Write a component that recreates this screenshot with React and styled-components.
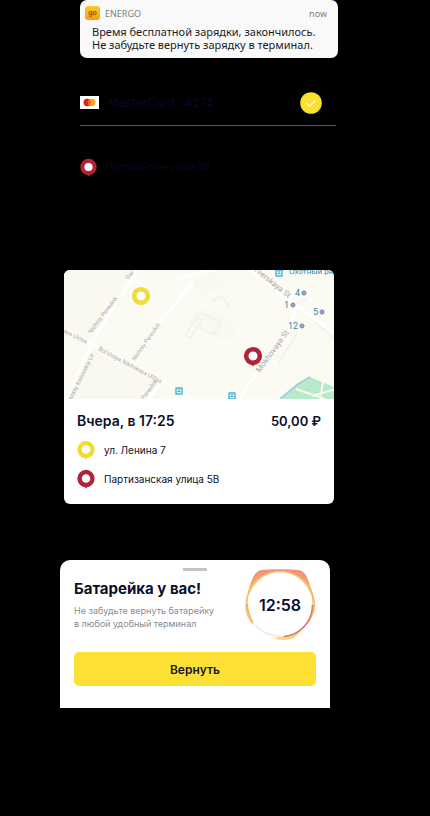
import React from 'react';
import styled, { createGlobalStyle } from 'styled-components';

const GlobalStyle = createGlobalStyle`
    * {
        box-sizing: border-box;
    }

    body {
        margin: 0;
        background: #000;
        color: #0d0f2b;
        font-family: Inter, "Liberation Sans", sans-serif;
    }

    h2, p {
        margin: 0;
    }
`;

const Page = styled.main`
    min-height: 100vh;
    background: #000;
`;

const Notification = styled.section`
    margin: 0 92px 0 80px;
    padding: 5px 11px 7px 5px;
    background: #f9f9f9;
    border-radius: 7px;
    font-family: "Noto Sans", sans-serif;
`;

const NotificationHead = styled.header`
    display: flex;
    align-items: center;
    gap: 5px;
    height: 16px;
    font-size: 9px;
    color: #7e7e7e;
`;

const NotificationTime = styled.time`
    margin-left: auto;
`;

const NotificationText = styled.p`
    padding: 4px 0 0 7px;
    font-size: 11px;
    line-height: 13px;
    color: #1b1b1b;
    white-space: nowrap;
`;

const Payment = styled.section`
    display: flex;
    align-items: center;
    gap: 9px;
    height: 46px;
    margin: 22px 94px 0 80px;
    padding-right: 14px;
    border-bottom: 1px solid #595955;
    color: #060a26;
    font-size: 12px;
`;

const PaymentName = styled.span`
    flex: 1;
`;

const Place = styled.div`
    display: flex;
    align-items: center;
    gap: 9px;
    font-size: ${props => props.$size || 10}px;
    line-height: 20px;
`;

const CurrentPlace = styled.section`
    margin: 31px 94px 0 80px;
    color: #060a26;
`;

const TripCard = styled.article`
    margin: 93px 96px 0 64px;
    background: #fff;
    border-radius: 6px;
    overflow: hidden;
`;

const MapView = styled.svg`
    display: block;
    width: 100%;
    height: 129px;
`;

const TripBody = styled.div`
    display: flex;
    flex-direction: column;
    gap: 9px;
    padding: 12px 13px 15px;
`;

const TripHead = styled.div`
    display: flex;
    justify-content: space-between;
    font-size: 14px;
    font-weight: 600;
    line-height: 20px;
`;

const TripPrice = styled.span`
    font-size: 13px;
`;

const Sheet = styled.section`
    margin: 56px 100px 0 60px;
    padding: 8px 14px 22px;
    background: #fff;
    border-radius: 10px 10px 0 0;
`;

const Handle = styled.div`
    width: 24px;
    height: 3px;
    margin: 0 auto;
    background: #c4c4c4;
`;

const SheetHead = styled.div`
    display: flex;
    justify-content: space-between;
    height: 71px;
`;

const SheetTitle = styled.h2`
    padding-top: 8px;
    font-size: 15px;
    font-weight: 700;
    line-height: 20px;
`;

const SheetText = styled.p`
    padding-top: 5px;
    color: #8b8b92;
    font-size: 9px;
    line-height: 13px;
    white-space: nowrap;
`;

const Timer = styled.div`
    display: grid;
    grid-template-rows: 67px;
    place-items: center;
    width: 72px;

    > * {
        grid-area: 1 / 1;
    }
`;

const TimerValue = styled.time`
    font-size: 16px;
    font-weight: 600;
`;

const ReturnButton = styled.button`
    display: block;
    width: 100%;
    height: 34px;
    margin-top: 10px;
    padding: 0;
    border: 0;
    border-radius: 5px;
    background: #fce033;
    color: #17152a;
    font: 600 12px Inter, "Liberation Sans", sans-serif;
    cursor: pointer;
`;

const yellow = '#f3db35';
const red = '#b02338';

const PinShape = ({ color, tail }) => (
    <g>
        {tail && <path d="M6 16 L10 20.5 L14 16Z" fill={color} />}
        <circle cx="10" cy="10" r="6.8" fill="#fff" stroke={color} strokeWidth="4.6" />
    </g>
);

const Pin = ({ color, tail, size = 18 }) => (
    <svg width={size} height={size + 2} viewBox="1 0 18 21" aria-hidden="true">
        <PinShape color={color} tail={tail} />
    </svg>
);

const AppIcon = () => (
    <svg width="15" height="14" viewBox="0 0 15 14" aria-hidden="true">
        <defs>
            <linearGradient id="appIcon" x1="0" y1="0" x2="0" y2="1">
                <stop offset="0" stopColor="#ffc928" />
                <stop offset="1" stopColor="#f79b14" />
            </linearGradient>
        </defs>
        <rect width="15" height="14" rx="3" fill="url(#appIcon)" />
        <text x="7.5" y="9" textAnchor="middle" fontSize="7" fontWeight="700" fontFamily="Inter, sans-serif" fill="#a05a08">go</text>
    </svg>
);

const MasterCardLogo = () => (
    <svg width="19" height="13" viewBox="0 0 19 13" aria-hidden="true">
        <rect width="19" height="13" fill="#fff" />
        <circle cx="7.2" cy="6.5" r="3.7" fill="#e3211c" />
        <circle cx="11.8" cy="6.5" r="3.7" fill="#f6a22c" />
        <path d="M9.5 3.6a3.7 3.7 0 0 1 0 5.8a3.7 3.7 0 0 1 0-5.8Z" fill="#f2601c" />
    </svg>
);

const CheckMark = () => (
    <svg width="22" height="22" viewBox="0 0 22 22" role="img" aria-label="Selected">
        <circle cx="11" cy="11" r="10.8" fill="#fbdf31" />
        <path d="M6.5 11.2l3.1 3.1 5.8-6" fill="none" stroke="#fffbe0" strokeWidth="1.3" />
    </svg>
);

const TimerRing = () => (
    <svg width="72" height="72" viewBox="0 0 72 72" fill="none" aria-hidden="true">
        <defs>
            <linearGradient id="blob" x1="0" y1="0" x2="0" y2="1">
                <stop offset="0" stopColor="#ee8f80" />
                <stop offset="0.3" stopColor="#f5b56c" />
                <stop offset="1" stopColor="#fbd784" />
            </linearGradient>
        </defs>
        <path
            fill="url(#blob)"
            d="M17 1C26 0 46 0 55 1C63 3 64 11 67 19C70 27 72 33 71 40C69 51 61 57 56 63C52 69 46 71 39 71C31 71 27 68 21 65C10 59 4 52 2 43C0 34 3 27 5 19C8 10 10 3 17 1Z"
        />
        <path d="M8 54C13 63 23 69 33 69L34 64Z" fill="#fff" />
        <circle cx="36" cy="35" r="32.5" fill="#fff" />
        <path d="M5 24C10 11 22 2.500 36 2.500S62 11 67 24" stroke="#fbc56d" strokeWidth="1.6" />
        <path d="M3.500 35C3.500 42 6 48 9 53" stroke="#ee9f59" strokeWidth="1" />
        <path d="M11 56C19 65 28 67 37 67.500" stroke="#f0e4ee" strokeWidth="1.6" />
        <path d="M40 67.500C56 66 68.500 53 68.500 36" stroke="#d9737a" strokeWidth="1.5" />
    </svg>
);

const streets = [
    { name: 'Gar', x: 64, y: 10, turn: -50 },
    { name: 'Nizhniy Pereulok', x: 27, y: 64, turn: -53 },
    { name: 'Nizhniy Pereulok', x: 71, y: 91, turn: -55 },
    { name: 'aya Ulitsa', x: -1, y: 62, turn: 27 },
    { name: "Bol'shaya Nikitskaya Ulitsa", x: 34, y: 80, turn: 28 },
    { name: 'Maliy Kislovskiy Ln', x: 8, y: 130, turn: -64 },
    { name: 'Pereulok', x: 80, y: 130, turn: -54 },
    { name: 'Tverskaya St', x: 189, y: 0, turn: 39, big: true },
    { name: 'Mokhovaya St', x: 196, y: 103, turn: -54, big: true },
];

const exits = [
    { label: '4', x: 231, y: 26 },
    { label: '1', x: 220, y: 38 },
    { label: '5', x: 249, y: 45 },
    { label: '12', x: 224, y: 59 },
];

const stations = [
    { x: 215, y: 3 },
    { x: 115, y: 121 },
    { x: 168, y: 126 },
];

const CityMap = () => (
    <MapView viewBox="0 0 270 129" preserveAspectRatio="xMidYMid slice" role="img" aria-label="Map">
        <rect width="270" height="129" fill="#fcfbf3" />
        <g fill="#faf9f0">
            <path d="M0 0H66L30 70L0 57Z M30 77L103 112L92 129H8Z" />
            <path d="M125 12L148 3L160 15L137 27Z M121 50L136 37L158 46L174 64L160 72Z" />
        </g>
        <g fill="none" stroke="#f3f3ed" strokeWidth="2">
            <path d="M148 31L158 26L166 38M121 65l12-18 5 3-12 18zM139 44l17 8-6 13-18-9M214 94l19-31" />
            <path d="M232 34l10-5M251 52l19 16" />
        </g>
        <g fill="none" stroke="#fff" strokeWidth="3">
            <path d="M-2 58L107 115L128 129M75-2L28 71L4 130M129 12L96 52L72 91M99 110L84 130" />
            <path d="M180-5L230 34L272 64M233 34L222 70L184 114L176 130M109 10L160-4" />
        </g>
        <path d="M216 129L234 114L246 107L270 117V129Z" fill="#b9e9cb" />
        <path d="M216 129L234 114L246 107" fill="none" stroke="#a9cbe3" strokeWidth="2" />
        <path d="M232 119l29 10M259 112l-3 17M248 126l24-7" fill="none" stroke="#f6faee" strokeWidth="2" />
        <g fontFamily="Roboto, sans-serif" fill="#aaa9a6">
            {streets.map((street, i) => (
                <text
                    key={i}
                    fontSize={street.big ? 8 : 6}
                    transform={`translate(${street.x} ${street.y}) rotate(${street.turn})`}
                >
                    {street.name}
                </text>
            ))}
        </g>
        <g fontFamily="Roboto, sans-serif" fill="#318aa8">
            <text x="225" y="4" fontSize="8">Охотный ряд</text>
            {exits.map(exit => {
                const iconX = exit.x + exit.label.length * 5 + 4;
                return (
                    <g key={exit.label}>
                        <text x={exit.x} y={exit.y} fontSize="9">{exit.label}</text>
                        <circle cx={iconX} cy={exit.y - 3} r="2" fill="#cfd3e6" stroke="#67789c" />
                        <path d={`M${iconX - 1} ${exit.y - 3}h2`} stroke="#67789c" />
                    </g>
                );
            })}
        </g>
        {stations.map(station => (
            <g key={station.x} transform={`translate(${station.x - 3} ${station.y - 3})`}>
                <rect width="6" height="6" fill="#dff6fa" stroke="#3bb0c9" strokeWidth="1.3" />
                <path d="M1.500 3.500h3M2 1.800h2" stroke="#3bb0c9" />
            </g>
        ))}
        <g transform="translate(67 16)">
            <PinShape color={yellow} />
        </g>
        <g transform="translate(179 76)">
            <PinShape color={red} tail />
        </g>
    </MapView>
);

const App = () => {
    return (
        <>
            <GlobalStyle />
            <Page>
                <Notification>
                    <NotificationHead>
                        <AppIcon />
                        <span>ENERGO</span>
                        <NotificationTime>now</NotificationTime>
                    </NotificationHead>
                    <NotificationText>
                        Время бесплатной зарядки, закончилось.<br />
                        Не забудьте вернуть зарядку в терминал.
                    </NotificationText>
                </Notification>

                <Payment>
                    <MasterCardLogo />
                    <PaymentName>MasterCard · 4274</PaymentName>
                    <CheckMark />
                </Payment>

                <CurrentPlace>
                    <Place $size={9}>
                        <Pin color={red} tail size={17} />
                        <span>Партизанская улица 5В</span>
                    </Place>
                </CurrentPlace>

                <TripCard>
                    <CityMap />
                    <TripBody>
                        <TripHead>
                            <span>Вчера, в 17:25</span>
                            <TripPrice>50,00 ₽</TripPrice>
                        </TripHead>
                        <Place>
                            <Pin color={yellow} tail />
                            <span>ул. Ленина 7</span>
                        </Place>
                        <Place>
                            <Pin color={red} tail />
                            <span>Партизанская улица 5В</span>
                        </Place>
                    </TripBody>
                </TripCard>

                <Sheet>
                    <Handle />
                    <SheetHead>
                        <div>
                            <SheetTitle>Батарейка у вас!</SheetTitle>
                            <SheetText>
                                Не забудьте вернуть батарейку<br />
                                в любой удобный терминал
                            </SheetText>
                        </div>
                        <Timer>
                            <TimerRing />
                            <TimerValue>12:58</TimerValue>
                        </Timer>
                    </SheetHead>
                    <ReturnButton type="button">Вернуть</ReturnButton>
                </Sheet>
            </Page>
        </>
    );
};

export default App;
